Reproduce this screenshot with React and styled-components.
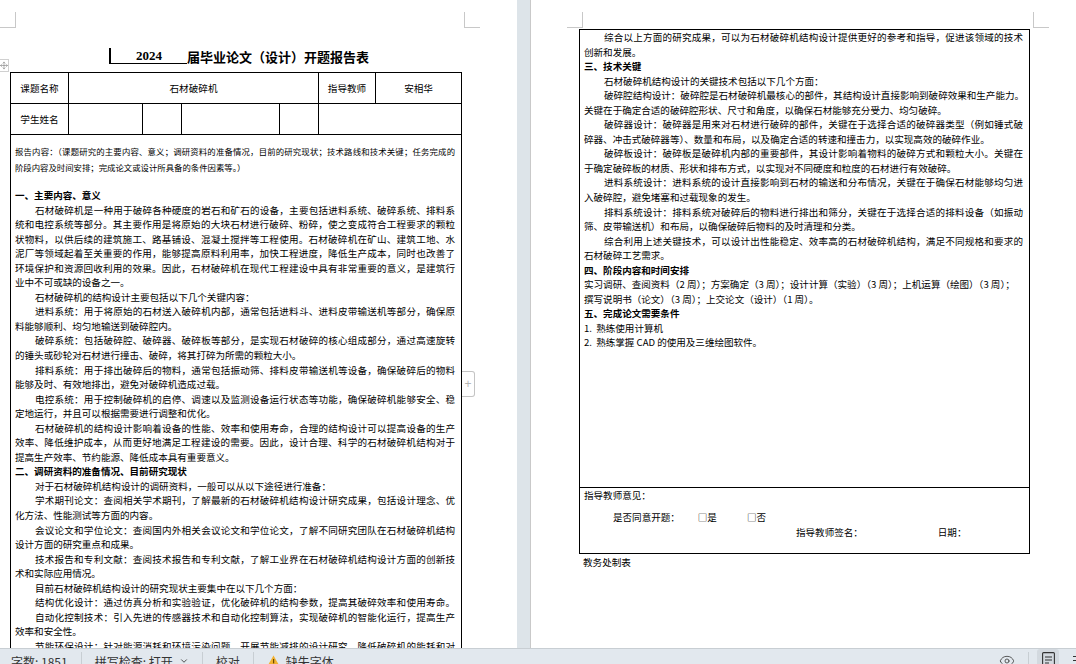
import React from 'react';
import styled, { createGlobalStyle } from 'styled-components';
import { Move, Eye, ChevronDown } from 'lucide-react';

const GlobalStyle = createGlobalStyle`
  html, body {
    margin: 0;
    padding: 0;
    height: 664px;
    overflow: hidden;
    background: #fff;
  }
`;

const Window = styled.div`
  width: 1076px;
  height: 664px;
  display: flex;
  flex-direction: column;
  overflow: hidden;
  font-family: "Noto Sans CJK SC", "Liberation Sans", sans-serif;
  color: #000;
`;

const Workspace = styled.div`
  height: 648px;
  flex-shrink: 0;
  display: flex;
  overflow: hidden;
`;

const Page = styled.div`
  position: relative;
  background: #fff;
  overflow: hidden;
  width: ${p => p.$width}px;
  padding-left: ${p => p.$left}px;
  padding-top: ${p => p.$top}px;
  box-sizing: border-box;
  flex-shrink: 0;
  border-left: ${p => (p.$edge ? '1px solid #c9c9c9' : 'none')};
`;

const Gutter = styled.div`
  width: 13px;
  flex-shrink: 0;
  background: #dde4e9;
`;

const CropMark = styled.div`
  position: absolute;
  top: 12px;
  left: ${p => p.$x}px;
  width: 16px;
  height: 16px;
  box-sizing: border-box;
  border-bottom: 1px solid #c8c8c8;
  ${p => (p.$side === 'left' ? 'border-right: 1px solid #c8c8c8;' : 'border-left: 1px solid #c8c8c8;')}
`;

const Title = styled.div`
  height: 15px;
  padding-left: 99px;
  margin-bottom: 8px;
  display: flex;
  align-items: flex-end;
  font-size: 13px;
  line-height: 15px;
  font-weight: 700;
  white-space: nowrap;
`;

const Year = styled.span`
  width: 76px;
  text-align: center;
  border-left: 2px solid #000;
  border-bottom: 1px solid #000;
  font-family: "Liberation Serif", serif;
`;

const MoveHandle = styled.div`
  position: absolute;
  left: -1px;
  top: 59px;
  width: 10px;
  height: 13px;
  box-sizing: border-box;
  border: 1px solid #d0d0d0;
  background: #fff;
  display: flex;
  align-items: center;
  justify-content: center;
  color: #666;
`;

const AddButton = styled.div`
  position: absolute;
  left: 462px;
  top: 371px;
  width: 13px;
  height: 26px;
  box-sizing: border-box;
  border: 1px solid #c4c4c4;
  border-left: none;
  border-radius: 0 3px 3px 0;
  background: #fff;
  color: #b5b5b5;
  font: 12px/24px "Liberation Sans", sans-serif;
  text-align: center;
`;

const FormTable = styled.table`
  width: 451px;
  border-collapse: collapse;
  table-layout: fixed;
`;

const Col = styled.col`
  width: ${p => p.$w}px;
`;

const Row = styled.tr`
  height: ${p => p.$h}px;
`;

const LabelCell = styled.td`
  border: 1px solid #000;
  padding: 0;
  text-align: center;
  vertical-align: middle;
  font-size: 9.6px;
  line-height: 14px;
`;

const BodyCell = styled.td`
  border: 1px solid #000;
  padding: ${p => p.$top}px 6px 0 4px;
  vertical-align: top;
  font-size: 9.55px;
`;

const Line = styled.div`
  font-size: 9.55px;
  line-height: 14.55px;
  height: 14.55px;
  white-space: nowrap;
  font-weight: ${p => (p.$bold ? 700 : 400)};
  padding-left: ${p => (p.$indent ? 20 : 0)}px;
  text-align: justify;
  text-align-last: ${p => (p.$fill ? 'justify' : 'left')};
`;

const IntroLine = styled.div`
  font-size: 8.4px;
  line-height: 16px;
  height: 16px;
  white-space: nowrap;
  text-align-last: ${p => (p.$fill ? 'justify' : 'left')};
`;

const Spacer = styled.div`
  height: ${p => p.$h}px;
`;

const SignRow = styled.div`
  display: flex;
  font-size: 9.55px;
  line-height: 14.55px;
  height: 14.55px;
  padding-left: ${p => p.$pad}px;
  margin-top: ${p => p.$top || 0}px;
  white-space: nowrap;
`;

const SignItem = styled.span`
  margin-left: ${p => p.$gap}px;
`;

const Footnote = styled.div`
  font-size: 9.6px;
  line-height: 14px;
  padding-left: 4px;
  margin-top: 1px;
`;

const StatusBar = styled.div`
  height: 25px;
  flex-shrink: 0;
  box-sizing: border-box;
  border-top: 1px solid #c8ced3;
  background: #e2e8ee;
  display: flex;
  align-items: center;
  padding-left: 11px;
  font-size: 12px;
  color: #333;
  white-space: nowrap;
`;

const StatusItem = styled.span`
  display: flex;
  align-items: center;
  gap: ${p => p.$gap || 0}px;
`;

const StatusDivider = styled.span`
  width: 1px;
  height: 18px;
  background: #c8ced3;
  margin-left: ${p => p.$m}px;
  margin-right: ${p => p.$r ?? p.$m}px;
`;

const StatusRight = styled.div`
  margin-left: auto;
  display: flex;
  align-items: center;
  height: 100%;
  color: #444;
`;

const ViewButton = styled.span`
  width: 22px;
  height: 100%;
  margin-left: 8px;
  border-radius: 3px;
  background: #d3d9df;
  display: flex;
  justify-content: center;
  padding-top: 3px;
  box-sizing: border-box;
`;

const WarningIcon = () => (
  <svg width="13" height="12" viewBox="0 0 13 12">
    <path d="M6.5 0.5 L12.8 11.5 L0.2 11.5 Z" fill="#f2b233" />
    <rect x="6" y="4" width="1.2" height="4.4" fill="#6b4a00" />
    <rect x="6" y="9.2" width="1.2" height="1.2" fill="#6b4a00" />
  </svg>
);

const PageViewIcon = () => (
  <svg width="13" height="16" viewBox="0 0 13 16" fill="none" stroke="#333" strokeWidth="1.1">
    <rect x="0.6" y="0.6" width="11.8" height="14.8" rx="1" />
    <path d="M3 5h7M3 8h7M3 11h4" />
  </svg>
);

const OutlineIcon = () => (
  <svg width="3" height="12" viewBox="0 0 3 12" stroke="#333" strokeWidth="1">
    <path d="M0 1.5h3M0 5.5h3M0 9.5h3" />
  </svg>
);

// f: full justified line, i: first line indent, b: section heading
const firstPage = [
  { b: 1, t: '一、主要内容、意义' },
  { i: 1, f: 1, t: '石材破碎机是一种用于破碎各种硬度的岩石和矿石的设备,主要包括进料系统、破碎系统、排料系' },
  { f: 1, t: '统和电控系统等部分。其主要作用是将原始的大块石材进行破碎、粉碎,使之变成符合工程要求的颗粒' },
  { f: 1, t: '状物料,以供后续的建筑施工、路基铺设、混凝土搅拌等工程使用。石材破碎机在矿山、建筑工地、水' },
  { f: 1, t: '泥厂等领域起着至关重要的作用,能够提高原料利用率,加快工程进度,降低生产成本,同时也改善了' },
  { f: 1, t: '环境保护和资源回收利用的效果。因此,石材破碎机在现代工程建设中具有非常重要的意义,是建筑行' },
  { t: '业中不可或缺的设备之一。' },
  { i: 1, t: '石材破碎机的结构设计主要包括以下几个关键内容:' },
  { i: 1, f: 1, t: '进料系统:用于将原始的石材送入破碎机内部,通常包括进料斗、进料皮带输送机等部分,确保原' },
  { t: '料能够顺利、均匀地输送到破碎腔内。' },
  { i: 1, f: 1, t: '破碎系统:包括破碎腔、破碎器、破碎板等部分,是实现石材破碎的核心组成部分,通过高速旋转' },
  { t: '的锤头或砂轮对石材进行撞击、破碎,将其打碎为所需的颗粒大小。' },
  { i: 1, f: 1, t: '排料系统:用于排出破碎后的物料,通常包括振动筛、排料皮带输送机等设备,确保破碎后的物料' },
  { t: '能够及时、有效地排出,避免对破碎机造成过载。' },
  { i: 1, f: 1, t: '电控系统:用于控制破碎机的启停、调速以及监测设备运行状态等功能,确保破碎机能够安全、稳' },
  { t: '定地运行,并且可以根据需要进行调整和优化。' },
  { i: 1, f: 1, t: '石材破碎机的结构设计影响着设备的性能、效率和使用寿命,合理的结构设计可以提高设备的生产' },
  { f: 1, t: '效率、降低维护成本,从而更好地满足工程建设的需要。因此,设计合理、科学的石材破碎机结构对于' },
  { t: '提高生产效率、节约能源、降低成本具有重要意义。' },
  { b: 1, t: '二、调研资料的准备情况、目前研究现状' },
  { i: 1, t: '对于石材破碎机结构设计的调研资料,一般可以从以下途径进行准备:' },
  { i: 1, f: 1, t: '学术期刊论文:查阅相关学术期刊,了解最新的石材破碎机结构设计研究成果,包括设计理念、优' },
  { t: '化方法、性能测试等方面的内容。' },
  { i: 1, f: 1, t: '会议论文和学位论文:查阅国内外相关会议论文和学位论文,了解不同研究团队在石材破碎机结构' },
  { t: '设计方面的研究重点和成果。' },
  { i: 1, f: 1, t: '技术报告和专利文献:查阅技术报告和专利文献,了解工业界在石材破碎机结构设计方面的创新技' },
  { t: '术和实际应用情况。' },
  { i: 1, t: '目前石材破碎机结构设计的研究现状主要集中在以下几个方面:' },
  { i: 1, f: 1, t: '结构优化设计:通过仿真分析和实验验证,优化破碎机的结构参数,提高其破碎效率和使用寿命。' },
  { i: 1, f: 1, t: '自动化控制技术:引入先进的传感器技术和自动化控制算法,实现破碎机的智能化运行,提高生产' },
  { t: '效率和安全性。' },
  { i: 1, f: 1, t: '节能环保设计:针对能源消耗和环境污染问题,开展节能减排的设计研究,降低破碎机的能耗和对' },
];

const secondPage = [
  { i: 1, f: 1, t: '综合以上方面的研究成果,可以为石材破碎机结构设计提供更好的参考和指导,促进该领域的技术' },
  { t: '创新和发展。' },
  { b: 1, t: '三、技术关键' },
  { i: 1, t: '石材破碎机结构设计的关键技术包括以下几个方面:' },
  { i: 1, f: 1, t: '破碎腔结构设计:破碎腔是石材破碎机最核心的部件,其结构设计直接影响到破碎效果和生产能力。' },
  { t: '关键在于确定合适的破碎腔形状、尺寸和角度,以确保石材能够充分受力、均匀破碎。' },
  { i: 1, f: 1, t: '破碎器设计:破碎器是用来对石材进行破碎的部件,关键在于选择合适的破碎器类型(例如锤式破' },
  { t: '碎器、冲击式破碎器等)、数量和布局,以及确定合适的转速和撞击力,以实现高效的破碎作业。' },
  { i: 1, f: 1, t: '破碎板设计:破碎板是破碎机内部的重要部件,其设计影响着物料的破碎方式和颗粒大小。关键在' },
  { t: '于确定破碎板的材质、形状和排布方式,以实现对不同硬度和粒度的石材进行有效破碎。' },
  { i: 1, f: 1, t: '进料系统设计:进料系统的设计直接影响到石材的输送和分布情况,关键在于确保石材能够均匀进' },
  { t: '入破碎腔,避免堵塞和过载现象的发生。' },
  { i: 1, f: 1, t: '排料系统设计:排料系统对破碎后的物料进行排出和筛分,关键在于选择合适的排料设备(如振动' },
  { t: '筛、皮带输送机)和布局,以确保破碎后物料的及时清理和分类。' },
  { i: 1, f: 1, t: '综合利用上述关键技术,可以设计出性能稳定、效率高的石材破碎机结构,满足不同规格和要求的' },
  { t: '石材破碎工艺需求。' },
  { b: 1, t: '四、阶段内容和时间安排' },
  { t: '实习调研、查阅资料(2 周);方案确定(3 周);设计计算(实验)(3 周);上机运算(绘图)(3 周);' },
  { t: '撰写说明书(论文)(3 周);上交论文(设计)(1 周)。' },
  { b: 1, t: '五、完成论文需要条件' },
  { t: '1.\u00a0\u00a0熟练使用计算机' },
  { t: '2.\u00a0\u00a0熟练掌握 CAD 的使用及三维绘图软件。' },
];

// the document text uses full width punctuation
const fullWidth = text =>
  text
    .replace(/,/g, '\uff0c')
    .replace(/:/g, '\uff1a')
    .replace(/;/g, '\uff1b')
    .replace(/\(/g, '\uff08')
    .replace(/\)/g, '\uff09');

const renderLines = lines =>
  lines.map((l, n) => (
    <Line key={n} $bold={l.b} $indent={l.i} $fill={l.f}>
      {fullWidth(l.t)}
    </Line>
  ));

export default function App() {
  return (
    <Window>
      <GlobalStyle />
      <Workspace>
        <Page $width={517} $left={10} $top={49}>
          <CropMark $side="left" $x={0} />
          <CropMark $side="right" $x={464} />
          <MoveHandle>
            <Move size={9} strokeWidth={1.5} />
          </MoveHandle>
          <AddButton>+</AddButton>
          <Title>
            <Year>2024</Year>
            {fullWidth('届毕业论文(设计)开题报告表')}
          </Title>
          <FormTable>
            <colgroup>
              <Col $w={58} />
              <Col $w={74} />
              <Col $w={39} />
              <Col $w={98} />
              <Col $w={39} />
              <Col $w={57} />
              <Col $w={86} />
            </colgroup>
            <tbody>
              <Row $h={31}>
                <LabelCell>课题名称</LabelCell>
                <LabelCell colSpan={4}>石材破碎机</LabelCell>
                <LabelCell>指导教师</LabelCell>
                <LabelCell>安相华</LabelCell>
              </Row>
              <Row $h={31}>
                <LabelCell>学生姓名</LabelCell>
                <LabelCell />
                <LabelCell />
                <LabelCell />
                <LabelCell />
                <LabelCell colSpan={2} />
              </Row>
              <Row $h={560}>
                <BodyCell colSpan={7} $top={8}>
                  <IntroLine $fill>
                    {fullWidth('报告内容:(课题研究的主要内容、意义;调研资料的准备情况,目前的研究现状;技术路线和技术关键;任务完成的')}
                  </IntroLine>
                  <IntroLine>{fullWidth('阶段内容及时间安排;完成论文或设计所具备的条件因素等。)')}</IntroLine>
                  <Spacer $h={13} />
                  {renderLines(firstPage)}
                </BodyCell>
              </Row>
            </tbody>
          </FormTable>
        </Page>
        <Gutter />
        <Page $width={546} $left={48} $top={29} $edge>
          <CropMark $side="left" $x={36} />
          <CropMark $side="right" $x={502} />
          <FormTable>
            <tbody>
              <Row $h={458}>
                <BodyCell $top={0}>{renderLines(secondPage)}</BodyCell>
              </Row>
              <Row $h={66}>
                <BodyCell $top={0}>
                  <SignRow $pad={0}>{fullWidth('指导教师意见:')}</SignRow>
                  <SignRow $pad={29} $top={7.5}>
                    {fullWidth('是否同意开题:')}
                    <SignItem $gap={18}>□是</SignItem>
                    <SignItem $gap={30}>□否</SignItem>
                  </SignRow>
                  <SignRow $pad={212}>
                    {fullWidth('指导教师签名:')}
                    <SignItem $gap={75}>{fullWidth('日期:')}</SignItem>
                  </SignRow>
                </BodyCell>
              </Row>
            </tbody>
          </FormTable>
          <Footnote>教务处制表</Footnote>
        </Page>
      </Workspace>
      <StatusBar>
        <StatusItem>字数: 1851</StatusItem>
        <StatusDivider $m={13} />
        <StatusItem $gap={6}>
          拼写检查: 打开
          <ChevronDown size={10} />
        </StatusItem>
        <StatusDivider $m={13} />
        <StatusItem>校对</StatusItem>
        <StatusDivider $m={13} />
        <StatusItem $gap={6}>
          <WarningIcon />
          缺失字体
        </StatusItem>
        <StatusRight>
          <Eye size={16} strokeWidth={1.3} />
          <StatusDivider $m={13} $r={0} />
          <ViewButton>
            <PageViewIcon />
          </ViewButton>
          <SignItem $gap={14}>
            <OutlineIcon />
          </SignItem>
        </StatusRight>
      </StatusBar>
    </Window>
  );
}
